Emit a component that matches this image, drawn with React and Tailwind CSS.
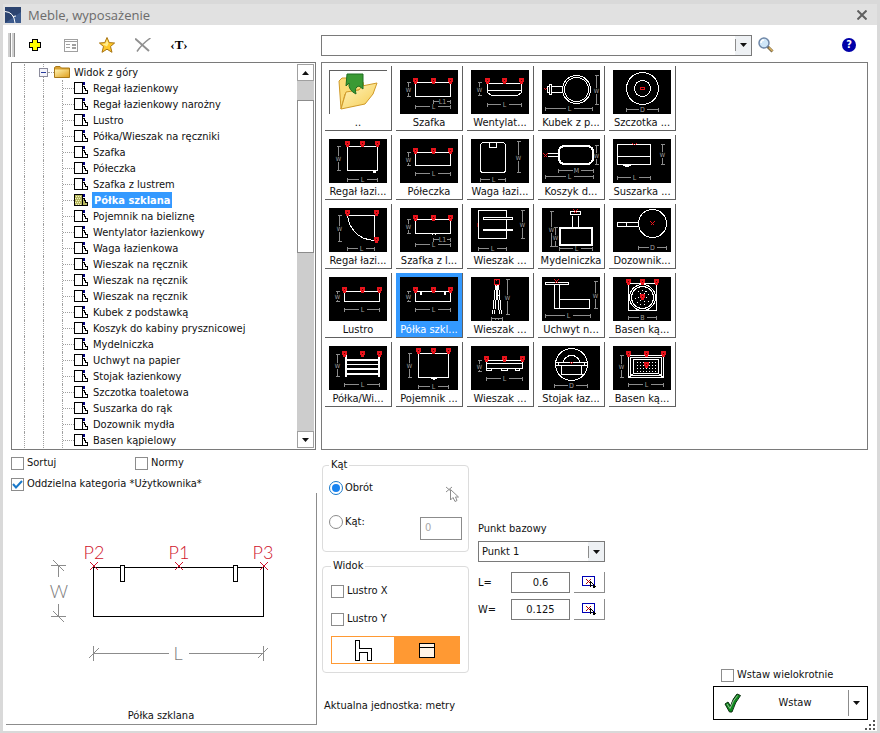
import React, { useState } from "react";

const treeItems = [
  "Regał łazienkowy",
  "Regał łazienkowy narożny",
  "Lustro",
  "Półka/Wieszak na ręczniki",
  "Szafka",
  "Półeczka",
  "Szafka z lustrem",
  "Półka szklana",
  "Pojemnik na bieliznę",
  "Wentylator łazienkowy",
  "Waga łazienkowa",
  "Wieszak na ręcznik",
  "Wieszak na ręcznik",
  "Wieszak na ręcznik",
  "Kubek z podstawką",
  "Koszyk do kabiny prysznicowej",
  "Mydelniczka",
  "Uchwyt na papier",
  "Stojak łazienkowy",
  "Szczotka toaletowa",
  "Suszarka do rąk",
  "Dozownik mydła",
  "Basen kąpielowy",
];

/* ---------- drawing helpers for the thumbnails (58x44) ---------- */

const HDim = ({ x1, x2, y, label = "L" }) => {
  const m = Math.round((x1 + x2) / 2);
  return (
    <g stroke="#8c8c8c" fill="none">
      <path d={`M${x1} ${y}H${m - 4}M${m + 4} ${y}H${x2}M${x1} ${y - 2}v4M${x2} ${y - 2}v4`} />
      <text x={m} y={y + 2} fontSize="7" textAnchor="middle" stroke="none" fill="#a0a0a0">
        {label}
      </text>
    </g>
  );
};

const VDim = ({ x, y1, y2 }) => {
  const m = Math.round((y1 + y2) / 2);
  return (
    <g stroke="#8c8c8c" fill="none">
      <path d={`M${x} ${y1}V${m - 3}M${x} ${m + 3}V${y2}M${x - 2} ${y1}h4M${x - 2} ${y2}h4`} />
      <text x={x} y={m + 2} fontSize="6" textAnchor="middle" stroke="none" fill="#a0a0a0">
        W
      </text>
    </g>
  );
};

const Points = ({ xs, y }) =>
  xs.map((x) => (
    <g key={x} stroke="none">
      <path d={`M${x - 3} ${y - 3}h5v4h-1v2h-3v-2h-1z`} fill="#e8141c" />
      <path d={`M${x - 1} ${y - 1}h1v1h-1z`} fill="#5c0000" />
    </g>
  ));

const Cross = ({ x, y, r = 2 }) => (
  <path d={`M${x - r} ${y - r}l${2 * r} ${2 * r}M${x - r} ${y + r}l${2 * r} ${-2 * r}`} stroke="#e8141c" />
);

const drawings = {
  cabinet: (
    <>
      <path d="M15 12H50V26H15z" />
      <Points xs={[15, 33, 50]} y={10} />
      <VDim x={8} y1={12} y2={26} />
      <HDim x1={33} x2={50} y={31} label="L1" />
      <HDim x1={15} x2={50} y={36} />
    </>
  ),
  fan: (
    <>
      <path d="M16 13H50V22L46 25H20L16 22zM16 20H50" />
      <Points xs={[16, 33, 50]} y={10} />
      <VDim x={8} y1={12} y2={25} />
      <HDim x1={16} x2={50} y={34} />
    </>
  ),
  cup: (
    <>
      <circle cx="34" cy="19" r="14" />
      <circle cx="34" cy="19" r="12" />
      <path d="M9 16H20M9 22H20M9 14V24H7V14zM7 16H5V22H7" />
      <Cross x={3} y={19} r={1} />
      <VDim x={54} y1={5} y2={34} />
      <HDim x1={3} x2={50} y={38} />
    </>
  ),
  brush: (
    <>
      <circle cx="29" cy="18" r="16" />
      <circle cx="29" cy="18" r="8" />
      <ellipse cx="29" cy="18" rx="2" ry="1.5" stroke="#e8141c" />
      <HDim x1={13} x2={45} y={39} label="D" />
    </>
  ),
  shelf: (
    <>
      <path d="M18 7H48V31H18zM44 32h2v1h-2z" />
      <Points xs={[18, 33, 48]} y={4} />
      <VDim x={9} y1={7} y2={31} />
      <HDim x1={18} x2={48} y={40} />
    </>
  ),
  smallShelf: (
    <>
      <path d="M15 13H50V26H15z" />
      <Points xs={[15, 33, 50]} y={11} />
      <VDim x={8} y1={13} y2={26} />
      <HDim x1={15} x2={50} y={34} />
    </>
  ),
  scale: (
    <>
      <rect x="9" y="3" width="25" height="30" rx="3" />
      <path d="M18 3V8H25V3" />
      <VDim x={47} y1={2} y2={33} />
      <HDim x1={9} x2={34} y={40} />
    </>
  ),
  basket: (
    <>
      <rect x="16" y="6" width="35" height="19" rx="6" />
      <rect x="17" y="7" width="33" height="17" rx="5" />
      <path d="M5 14H16M5 17H16" />
      <Cross x={3} y={16} />
      <VDim x={54} y1={6} y2={25} />
      <HDim x1={16} x2={51} y={31} label="M" />
      <HDim x1={3} x2={51} y={37} />
    </>
  ),
  dryer: (
    <>
      <path d="M4 5H37V25H4zM4 17H37M9 26H17M11 27H15" />
      <path d="M19 4l2 2M23 4l-2 2" stroke="#e8141c" />
      <VDim x={49} y1={5} y2={25} />
      <HDim x1={4} x2={37} y={38} />
    </>
  ),
  corner: (
    <>
      <path d="M18 7H45V32Q32 31 26 24Q19 17 18 7z" />
      <Points xs={[18, 47]} y={4} />
      <Points xs={[47]} y={31} />
      <VDim x={10} y1={7} y2={33} />
      <HDim x1={18} x2={45} y={40} />
    </>
  ),
  mirrorCabinet: (
    <>
      <path d="M15 11H50V25H15zM31 26h1M34 26h1" />
      <Points xs={[15, 33, 50]} y={9} />
      <VDim x={8} y1={11} y2={25} />
      <HDim x1={33} x2={50} y={31} label="L1" />
      <HDim x1={15} x2={50} y={36} />
    </>
  ),
  hangerBars: (
    <>
      <path d="M7 2H35V30H7z" />
      <path d="M12 9H41V11H12zM12 21H41V22H12z" fill="#000" />
      <path d="M6 14v4" stroke="#7a0000" />
      <VDim x={51} y1={2} y2={30} />
      <HDim x1={7} x2={35} y={40} />
    </>
  ),
  soap: (
    <>
      <path d="M17 19H50V37H17zM18 20H49V36H18z" />
      <path d="M30 7V19M36 7V19M28 3H38V6H28z" />
      <Cross x={33} y={3} />
      <VDim x={9} y1={3} y2={38} />
      <VDim x={13} y1={19} y2={38} />
      <HDim x1={17} x2={50} y={40} />
    </>
  ),
  dispenser: (
    <>
      <circle cx="39" cy="15" r="14" />
      <path d="M4 14H25V18H4zM13 14V18" />
      <Cross x={39} y={15} />
      <HDim x1={25} x2={53} y={39} label="D" />
    </>
  ),
  mirror: (
    <>
      <path d="M15 14H50V24H15z" />
      <Points xs={[15, 33, 50]} y={12} />
      <VDim x={8} y1={14} y2={24} />
      <HDim x1={15} x2={50} y={32} />
    </>
  ),
  glass: (
    <>
      <path d="M15 14H50V24H15zM20 14h1v3h-1zM44 14h1v3h-1z" />
      <Points xs={[15, 33, 50]} y={12} />
      <VDim x={8} y1={14} y2={24} />
      <HDim x1={15} x2={50} y={32} />
    </>
  ),
  hangerLegs: (
    <>
      <path d="M24 8L21 37M26 8L23 37M25 8L28 37M27 8L30 37M24 18h3" />
      <path d="M23 2H28V7H23zM25 1v2M25 6v2" stroke="#e8141c" />
      <VDim x={36} y1={2} y2={37} />
      <path d="M20 41H31M20 39v4M31 39v4M24 40v2M27 40v2" stroke="#8c8c8c" />
    </>
  ),
  holder: (
    <>
      <path d="M3 5H26V7H3zM12 7V31H47V22H17V7M17 22V31" />
      <Cross x={14} y={4} />
      <VDim x={53} y1={4} y2={31} />
      <HDim x1={3} x2={48} y={38} />
    </>
  ),
  roundPool: (
    <>
      <path d="M15 6H43V33H15z" />
      <circle cx="29" cy="20" r="13" />
      <circle cx="29" cy="20" r="11" />
      <circle cx="29" cy="20" r="7" strokeDasharray="1 3" />
      <circle cx="29" cy="20" r="4" strokeDasharray="1 3" />
      <Points xs={[15, 29, 43]} y={4} />
      <Points xs={[29]} y={19} />
      <HDim x1={15} x2={43} y={40} label="B" />
    </>
  ),
  rack: (
    <>
      <path d="M16 8V30M50 8V30M17 13H49M17 14H49M17 18H49M17 22H49M17 23H49M17 27H49M17 28H49M17 8V30M49 8V30" />
      <Points xs={[15, 33, 50]} y={7} />
      <VDim x={8} y1={8} y2={30} />
      <HDim x1={15} x2={50} y={38} />
    </>
  ),
  bin: (
    <>
      <path d="M18 7H48V31H18zM30 32h6M32 33h2" />
      <Points xs={[18, 33, 48]} y={4} />
      <VDim x={9} y1={7} y2={31} />
      <HDim x1={18} x2={48} y={40} />
    </>
  ),
  hangerRail: (
    <>
      <path d="M15 14H51V22H48V24H44V22H36V24H30V22H20V24H15zM15 17H51M15 22H51" />
      <Points xs={[15, 33, 51]} y={12} />
      <VDim x={8} y1={14} y2={25} />
      <HDim x1={15} x2={51} y={32} />
    </>
  ),
  stand: (
    <>
      <circle cx="29" cy="18" r="16" />
      <path d="M13 16H45V19H13zM16 16V19M42 16V19M21 16A8 7 0 0 1 37 16M19 19V28M39 19V28M18 28H40" />
      <Cross x={29} y={17} r={1} />
      <HDim x1={12} x2={45} y={39} label="D" />
    </>
  ),
  pool: (
    <>
      <path d="M15 9H50V31H15zM17 11H48V29H17zM20 13H45V27H20zM15 31L20 27M50 31L45 27" />
      <path d="M23 16H43M23 19H43M23 22H43M23 25H43" strokeDasharray="1 2" />
      <Points xs={[15, 33, 50]} y={7} />
      <Points xs={[33]} y={18} />
      <VDim x={8} y1={9} y2={31} />
      <HDim x1={15} x2={50} y={38} />
    </>
  ),
};

const gridItems = [
  { label: "..", art: "up" },
  { label: "Szafka", art: "cabinet" },
  { label: "Wentylat...", art: "fan" },
  { label: "Kubek z p...", art: "cup" },
  { label: "Szczotka ...", art: "brush" },
  { label: "Regał łazi...", art: "shelf" },
  { label: "Półeczka", art: "smallShelf" },
  { label: "Waga łazi...", art: "scale" },
  { label: "Koszyk d...", art: "basket" },
  { label: "Suszarka ...", art: "dryer" },
  { label: "Regał łazi...", art: "corner" },
  { label: "Szafka z l...", art: "mirrorCabinet" },
  { label: "Wieszak ...", art: "hangerBars" },
  { label: "Mydelniczka", art: "soap" },
  { label: "Dozownik...", art: "dispenser" },
  { label: "Lustro", art: "mirror" },
  { label: "Półka szkl...", art: "glass" },
  { label: "Wieszak ...", art: "hangerLegs" },
  { label: "Uchwyt n...", art: "holder" },
  { label: "Basen ką...", art: "roundPool" },
  { label: "Półka/Wi...", art: "rack" },
  { label: "Pojemnik ...", art: "bin" },
  { label: "Wieszak ...", art: "hangerRail" },
  { label: "Stojak łaz...", art: "stand" },
  { label: "Basen ką...", art: "pool" },
];

const FolderUp = () => (
  <svg width="58" height="44" viewBox="0 0 58 44">
    <defs>
      <linearGradient id="fold" x1="0" y1="0" x2="1" y2="1">
        <stop offset="0" stopColor="#fff6c4" />
        <stop offset="1" stopColor="#f6cc50" />
      </linearGradient>
    </defs>
    <path d="M.5 44V.5H58" fill="none" stroke="#606060" shapeRendering="crispEdges" />
    <path d="M12 39L10 11L13 8L18 8L21 11L34 12L35 18L16 24z" fill="#fbdc78" stroke="#d09a28" />
    <path d="M12 39L17 22L30 20L33 16L48 13L44 24L36 34z" fill="url(#fold)" stroke="#d09a28" />
    <path d="M18 4H34V19L30 16Q25 17 27 24Q19 20 20 13L17 16z" fill="#3a9a34" stroke="#1f6e22" />
  </svg>
);

const Thumb = ({ art }) =>
  art === "up" ? (
    <FolderUp />
  ) : (
    <svg width="58" height="44" viewBox="0 0 58 44" className="bg-black" shapeRendering="crispEdges">
      <g transform="translate(.5 .5)" fill="none" stroke="#fff">
        {drawings[art]}
      </g>
    </svg>
  );

/* ---------- small icons ---------- */

const BlockIcon = ({ active }) => (
  <svg width="14" height="14" viewBox="0 0 14 14" shapeRendering="crispEdges">
    <path d="M.5 1.5H8.5V12.5H.5z" fill={active ? "#b8b860" : "#fff"} stroke="#000" />
    {active && <path d="M2 3h6M1 5h6M2 7h6M1 9h6M2 11h6" stroke="#f4f4c0" strokeDasharray="1 1" />}
    <path d="M9 1h2v3h-2z" fill="#000080" />
    <path d="M9 5.500H10.500V7.500H11.500V9.500H13.500V12.500H9" fill={active ? "#b8b860" : "#fff"} stroke="#000" />
  </svg>
);

const Folder = () => (
  <svg width="16" height="16" viewBox="0 0 16 16">
    <defs>
      <linearGradient id="yf" x1="0" y1="0" x2="1" y2="1">
        <stop offset="0" stopColor="#fff3b0" />
        <stop offset="1" stopColor="#e0a020" />
      </linearGradient>
    </defs>
    <path d="M.5 3.5L2 2.500H6L7.500 4H15.500V13.500H.5z" fill="#d9a233" stroke="#a87818" />
    <path d="M1 5.500H15V13H1z" fill="url(#yf)" />
  </svg>
);

const Caret = ({ up }) => (
  <svg width="7" height="4" viewBox="0 0 7 4" className="shrink-0">
    <path d={up ? "M0 4L3.500 0L7 4z" : "M0 0H7L3.500 4z"} fill="#111" />
  </svg>
);

const PickIcon = () => (
  <svg width="16" height="14" viewBox="0 0 16 14" shapeRendering="crispEdges">
    <path d="M1.500 1.500H13.500V10.500H1.500z" fill="#fff" stroke="#0000b4" />
    <path d="M5 4l5 5M10 4l-5 5" stroke="#b00000" />
    <path
      d="M9.500 6.500V11.500M9.500 6.500L14.500 11.500M9.500 11.500L11 10.500M12 10.500L13.500 13.500M14.500 11.500H12"
      fill="none"
      stroke="#000"
    />
  </svg>
);

const tools = [
  {
    name: "Dodaj",
    icon: (
      <svg width="14" height="14" viewBox="0 0 14 14" shapeRendering="crispEdges">
        <path
          d="M4.500 1.500H9.500V4.500H12.500V9.500H9.500V12.500H4.500V9.500H1.500V4.500H4.500z"
          fill="#ffff00"
          stroke="#000"
        />
      </svg>
    ),
  },
  {
    name: "Właściwości",
    icon: (
      <svg width="14" height="13" viewBox="0 0 14 13" shapeRendering="crispEdges">
        <path
          d="M.5 .5H13.500V12.500H.5zM0 2.500H14M2 5.500H6M2 8.500H6M8.500 5.500H11.500V6.500H8.500zM8.500 8.500H11.500V9.500H8.500z"
          fill="none"
          stroke="#a0a0a0"
        />
      </svg>
    ),
  },
  {
    name: "Ulubione",
    icon: (
      <svg width="16" height="16" viewBox="0 0 16 16">
        <path
          d="M8 .5L10.200 5.600L15.600 6L11.500 9.500L13 15.300L8 12.200L3 15.300L4.500 9.500L.4 6L5.800 5.600z"
          fill="#ffc828"
          stroke="#a87414"
        />
        <path d="M8 2.500L9.500 6.500L8 9.500L3 7L6.500 6.500z" fill="#ffec90" />
      </svg>
    ),
  },
  {
    name: "Usuń",
    icon: (
      <svg width="16" height="14" viewBox="0 0 16 14">
        <path d="M0 .5L14 13" fill="none" stroke="#909090" strokeWidth="2" />
        <path d="M15.500 0Q7 6 2 13.500" fill="none" stroke="#909090" strokeWidth="1.500" />
      </svg>
    ),
  },
];

const CheckBox = ({ label, defaultChecked }) => (
  <label className="flex h-4 items-center gap-[3px]">
    <span className="grid place-items-center">
      <input
        type="checkbox"
        defaultChecked={defaultChecked}
        className="peer col-start-1 row-start-1 size-[13px] appearance-none border border-[#8c8c8c] bg-white"
      />
      <svg
        width="11"
        height="9"
        viewBox="0 0 11 9"
        className="pointer-events-none invisible col-start-1 row-start-1 peer-checked:visible"
      >
        <path d="M1 4L4 7.500L10 1" fill="none" stroke="#1979ca" strokeWidth="2" />
      </svg>
    </span>
    {label}
  </label>
);

const Radio = ({ label, defaultChecked }) => (
  <label className="flex h-4 items-center gap-0.5">
    <span className="grid place-items-center">
      <input
        type="radio"
        name="angle"
        defaultChecked={defaultChecked}
        className="peer col-start-1 row-start-1 size-[14px] appearance-none rounded-full border border-[#8c8c8c] bg-white checked:border-[#1979ca]"
      />
      <span className="pointer-events-none invisible col-start-1 row-start-1 size-2 rounded-full bg-[#1883f0] peer-checked:visible" />
    </span>
    {label}
  </label>
);

const Group = ({ title, className, children }) => (
  <fieldset className={`rounded-[4px] border border-[#dcdcdc] ${className}`}>
    <legend className="px-0.5 leading-4">{title}</legend>
    {children}
  </fieldset>
);

const Combo = ({ label, options, className, id }) => (
  <div className={`grid h-[21px] items-center border border-[#7a7a7a] bg-white ${className}`}>
    <select
      id={id}
      aria-label={label}
      className="col-start-1 row-start-1 h-full w-full appearance-none bg-transparent pl-[3px] outline-none"
    >
      {options.map((o) => (
        <option key={o}>{o}</option>
      ))}
    </select>
    <span className="pointer-events-none col-start-1 row-start-1 flex h-full w-4 items-center gap-1 justify-self-end bg-[#eef1f4]">
      <span className="h-3 w-px shrink-0 bg-[#8c8c8c]" />
      <Caret />
    </span>
  </div>
);

const Tree = ({ selected, onSelect }) => (
  <div className="flex justify-between border border-[#7a7a7a] bg-white p-px">
    <ul className="pl-[11px]">
      <li className="flex h-4 items-center">
        <span className="h-4 w-[15px] border-l border-dotted border-[#a0a0a0]" />
        <svg width="9" height="16" viewBox="0 0 9 16" shapeRendering="crispEdges">
          <path d="M4.500 0V4M4.500 13V16" stroke="#a0a0a0" strokeDasharray="1 1" />
          <path d="M.5 4.500H8.500V12.500H.5z" fill="#f4f4fa" stroke="#8c8c9c" />
          <path d="M2 8.500H7" stroke="#283c9c" />
        </svg>
        <span className="w-1.5 border-t border-dotted border-[#a0a0a0]" />
        <Folder />
        <span className="ml-1 h-4 pt-px">Widok z góry</span>
      </li>
      {treeItems.map((name, i) => (
        <li key={i} className="flex h-4 items-center">
          <span className="h-4 w-[19px] border-l border-dotted border-[#a0a0a0]" />
          <span className="h-4 w-[19px] border-l border-dotted border-[#a0a0a0]" />
          <span className="flex h-4 w-3 items-center border-l border-dotted border-[#a0a0a0]">
            <span className="w-full border-t border-dotted border-[#a0a0a0]" />
          </span>
          <BlockIcon active={i === selected} />
          <button
            type="button"
            onClick={() => onSelect(i)}
            className={
              i === selected
                ? "ml-1 h-4 bg-[#3399ff] px-0.5 pt-px font-bold whitespace-nowrap text-white"
                : "ml-1 h-4 px-px pt-px whitespace-nowrap"
            }
          >
            {name}
          </button>
        </li>
      ))}
    </ul>
    <div className="flex w-[17px] flex-col bg-[#cdcdcd]">
      <button type="button" aria-label="W górę" className="grid h-[17px] place-items-center border border-[#a0a0a0] bg-white">
        <Caret up />
      </button>
      <div className="mt-[19px] h-[153px] border border-[#8c8c8c] bg-white" />
      <button type="button" aria-label="W dół" className="mt-auto grid h-[17px] place-items-center border border-[#a0a0a0] bg-white">
        <Caret />
      </button>
    </div>
  </div>
);

const Preview = () => (
  <figure className="flex flex-col items-center border-r border-b border-[#8c8c8c]">
    <svg width="310" height="215" viewBox="0 0 310 215" fill="none" fontFamily="Lato, sans-serif" fontWeight="300" fontSize="18">
      <g stroke="#000" shapeRendering="crispEdges">
        <path d="M87.500 74.500H257.500V123.500H87.500z" />
        <path d="M114.500 72.500H118.500V88.500H114.500zM227.500 72.500H231.500V88.500H227.500z" fill="#fff" />
      </g>
      <path
        d="M84 69l8 8M84 77l8 -8M169 69l8 8M169 77l8 -8M254 69l8 8M254 77l8 -8"
        stroke="#d0142c"
      />
      <g fill="#d0142c" textAnchor="middle">
        <text x="88" y="66">P2</text>
        <text x="173" y="66">P1</text>
        <text x="257" y="66">P3</text>
      </g>
      <path
        d="M45 72.500H60M52.500 72V84M47 67l11 11M45 123.500H60M52.500 124V111M47 118l11 11M87.500 153V168M83 165l10 -10M88 160.500H163M183 160.500H257M257.500 153V168M252 165l10 -10"
        stroke="#8c8c8c"
      />
      <g fill="#7c7c7c" textAnchor="middle">
        <text x="53" y="105">W</text>
        <text x="172" y="167">L</text>
      </g>
    </svg>
    <figcaption>Półka szklana</figcaption>
  </figure>
);

const SizeRow = ({ id, label, value }) => (
  <div className="flex items-center">
    <label htmlFor={id} className="w-[33px]">
      {label}
    </label>
    <input
      id={id}
      defaultValue={value}
      className="h-[21px] w-[59px] border border-[#7a7a7a] bg-white text-center outline-none"
    />
    <button
      type="button"
      aria-label={`Wskaż ${label}`}
      className="ml-1 grid h-[21px] w-[31px] place-items-center border-r border-b border-[#8c8c8c]"
    >
      <PickIcon />
    </button>
  </div>
);

const App = () => {
  const [selected, setSelected] = useState(7);
  const [tile, setTile] = useState(16);

  return (
    <div className="flex min-h-screen w-full flex-col border-x-[3px] border-t-4 border-b-2 border-[#d9d9d9] bg-white font-['DejaVu_Sans_Condensed','DejaVu_Sans',sans-serif] text-[11px] leading-4 text-[#111]">
      <header className="flex h-[21px] items-center bg-[#e1e1e1] pr-2.5 pl-0.5">
        <svg width="16" height="16" viewBox="0 0 16 16">
          <rect width="16" height="16" fill="#3c5a8c" />
          <path d="M0 0H16V5L0 16z" fill="#2c4470" />
          <path d="M0 4.500Q9 5 10 16M8 9.500L11 9" fill="none" stroke="#fff" />
        </svg>
        <h1 className="ml-[7px] font-['Open_Sans',sans-serif] text-[13px] text-[#6b6b6b]">Meble, wyposażenie</h1>
        <button type="button" aria-label="Zamknij" className="ml-auto">
          <svg width="10" height="10" viewBox="0 0 10 10">
            <path d="M.5 .5L9.500 9.500M9.500 .5L.5 9.500" stroke="#606060" strokeWidth="2" />
          </svg>
        </button>
      </header>

      <div className="flex h-[37px] items-center pt-[3px] pr-[9px]">
        <div className="flex w-[318px] shrink-0 items-center pl-[5px]">
          <span className="mr-0.5 flex w-[7px] gap-px">
            <span className="h-6 w-[3px] border-r border-[#8c8c8c] bg-[#cfcfcf]" />
            <span className="h-6 w-[3px] border-r border-[#8c8c8c] bg-[#cfcfcf]" />
          </span>
          {tools.map((t) => (
            <button key={t.name} type="button" aria-label={t.name} className="grid h-6 w-9 place-items-center">
              {t.icon}
            </button>
          ))}
          <button
            type="button"
            className="h-6 w-9 font-['Liberation_Serif',serif] text-[13px] font-bold text-black"
          >
            ‹T›
          </button>
        </div>
        <Combo label="Szukaj" options={[""]} className="flex-1" />
        <button type="button" aria-label="Znajdź" className="ml-1.5">
          <svg width="16" height="16" viewBox="0 0 16 16">
            <path d="M9.500 9.500L14.500 14.500" stroke="#7a6a4a" strokeWidth="3" />
            <path d="M11 10.500L14.500 14" stroke="#d8b060" strokeWidth="1.500" />
            <circle cx="6" cy="6" r="5" fill="#cfe6f8" stroke="#7088a8" strokeWidth="1.500" />
            <path d="M3 6Q3 3 6 3" fill="none" stroke="#fff" strokeWidth="1.500" />
          </svg>
        </button>
        <button
          type="button"
          aria-label="Pomoc"
          className="mr-3 ml-[68px] size-[14px] rounded-full bg-[#0000a8] text-[11px] leading-[14px] font-bold text-white"
        >
          ?
        </button>
      </div>

      <div className="flex flex-1">
        <div className="w-[314px] shrink-0 pl-[3px]">
          <div className="pr-px pl-[5px]">
            <Tree selected={selected} onSelect={setSelected} />
            <div className="flex flex-col gap-[5px] pt-[5px]">
              <div className="grid grid-cols-[124px_1fr]">
                <CheckBox label="Sortuj" />
                <CheckBox label="Normy" />
              </div>
              <CheckBox label="Oddzielna kategoria *Użytkownika*" defaultChecked />
            </div>
          </div>
          <div className="pt-px">
            <Preview />
          </div>
        </div>

        <div className="flex min-w-0 flex-1 flex-col pr-[9px] pl-1">
          <div className="h-[388px] border border-[#7a7a7a] bg-white p-[3px]">
            <div className="grid w-fit grid-cols-5 gap-1">
              {gridItems.map((g, i) => (
                <button
                  key={i}
                  type="button"
                  onClick={() => setTile(i)}
                  className={
                    i === tile
                      ? "flex h-[65px] w-[67px] flex-col items-center gap-px border-r border-b border-[#606060] bg-[#3399ff] pt-1 text-white"
                      : "flex h-[65px] w-[67px] flex-col items-center gap-px border-r border-b border-[#606060] pt-1"
                  }
                >
                  <Thumb art={g.art} />
                  <span className="h-[15px] leading-[15px] whitespace-nowrap">{g.label}</span>
                </button>
              ))}
            </div>
          </div>

          <div className="flex flex-1">
            <div className="flex w-[148px] flex-col gap-1.5 pt-[7px] pl-px">
              <Group title="Kąt" className="px-1.5 pb-[11px]">
                <div className="flex h-[29px] items-end justify-between pt-[7px]">
                  <div className="self-start">
                    <Radio label="Obrót" defaultChecked />
                  </div>
                  <svg width="14" height="16" viewBox="0 0 14 16" className="mr-0.5" fill="none" stroke="#8c8c8c">
                    <path d="M0 1l6 5M0 6l6 -5" />
                    <path d="M4.500 3.500V14L7 11.500L9 15.500L11 14.500L9.500 11H12.500z" fill="#fff" />
                  </svg>
                </div>
                <div className="mt-3 flex justify-between">
                  <Radio label="Kąt:" />
                  <input
                    disabled
                    aria-label="Kąt"
                    defaultValue="0"
                    className="mt-[3px] h-[23px] w-[42px] border border-[#8c8c8c] bg-white px-1 pb-0.5 text-[#a8a8a8]"
                  />
                </div>
              </Group>
              <Group title="Widok" className="px-2 pt-[9px] pb-2">
                <div className="flex flex-col gap-3">
                  <CheckBox label="Lustro X" />
                  <CheckBox label="Lustro Y" />
                </div>
                <div className="mt-[9px] grid h-7 grid-cols-[62px_1fr] border border-[#ff9933]">
                  <button type="button" aria-label="Widok z boku" className="grid place-items-center bg-white">
                    <svg width="17" height="21" viewBox="0 0 17 21" fill="none" stroke="#000" shapeRendering="crispEdges">
                      <path d="M.5 .5H4.500V8.500H16.500V20.500H12.500V12.500H4.500V20.500H.5z" />
                    </svg>
                  </button>
                  <button type="button" aria-label="Widok z góry" className="grid place-items-center bg-[#ff9933]">
                    <svg width="16" height="15" viewBox="0 0 16 15" shapeRendering="crispEdges">
                      <path d="M.5 .5H15.500V14.500H.5zM0 4.500H16" fill="#fff3e6" stroke="#000" />
                    </svg>
                  </button>
                </div>
              </Group>
              <p className="mt-[19px] pl-0.5 whitespace-nowrap">Aktualna jednostka: metry</p>
            </div>

            <div className="ml-[9px] w-[127px] pt-[71px]">
              <label htmlFor="base">Punkt bazowy</label>
              <Combo id="base" options={["Punkt 1", "Punkt 2", "Punkt 3"]} className="mt-1" />
              <div className="mt-2.5 flex flex-col gap-1.5">
                <SizeRow id="len" label="L=" value="0.6" />
                <SizeRow id="wid" label="W=" value="0.125" />
              </div>
            </div>

            <div className="ml-auto flex w-[155px] flex-col justify-end pb-[11px]">
              <div className="mb-[3px] pl-2">
                <CheckBox label="Wstaw wielokrotnie" />
              </div>
              <div className="flex h-[34px] items-center border border-black bg-white">
                <button type="button" className="flex h-full flex-1 items-center pl-2.5">
                  <svg width="18" height="20" viewBox="0 0 18 20">
                    <path d="M1 11L4 9L6.500 13Q9 5 13 1L16.500 2.500Q11 9 8 19H5.500z" fill="#0c8c1c" stroke="#0c2c10" />
                    <path d="M3 11L6 15.500Q9 7 13.500 2.500" fill="none" stroke="#98b898" />
                  </svg>
                  <span className="flex-1">Wstaw</span>
                </button>
                <span className="h-[26px] w-px bg-[#8c8c8c]" />
                <button type="button" aria-label="Więcej" className="flex h-full w-[18px] items-center pl-1">
                  <Caret />
                </button>
              </div>
            </div>
          </div>
        </div>
      </div>

      <svg width="12" height="12" viewBox="0 0 12 12" className="absolute right-1 bottom-0.5" fill="#555" aria-hidden="true">
        <path d="M9 1h2v2h-2zM5 5h2v2h-2zM9 5h2v2h-2zM1 9h2v2h-2zM5 9h2v2h-2zM9 9h2v2h-2z" />
      </svg>
    </div>
  );
};

export default App;
